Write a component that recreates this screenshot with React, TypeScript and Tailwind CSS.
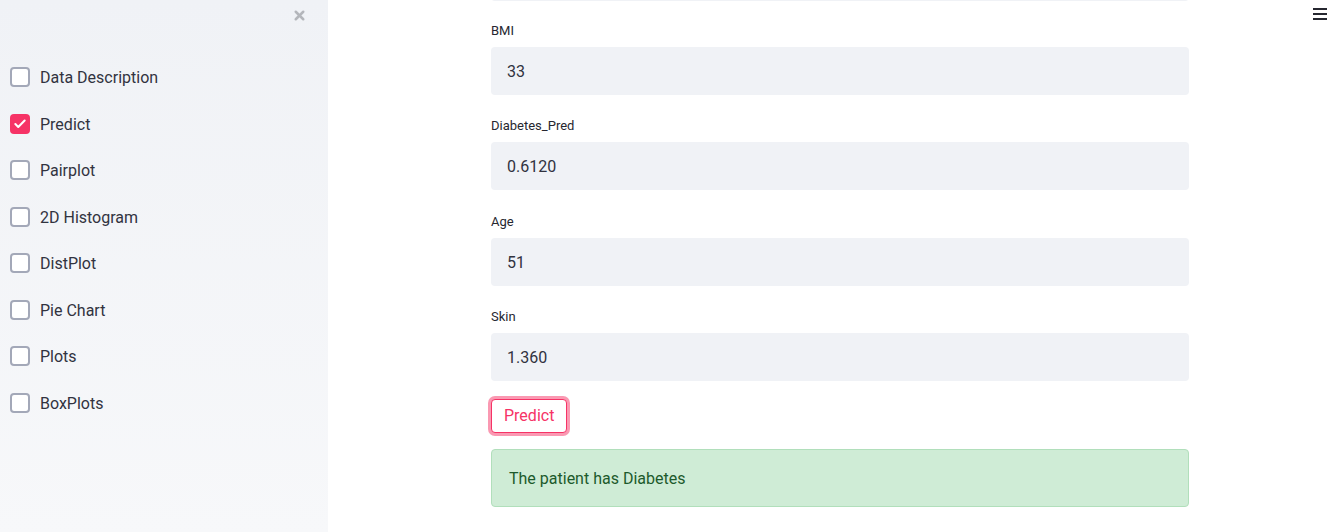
import { Check, X } from 'lucide-react';

const options = [
  { label: 'Data Description', checked: false },
  { label: 'Predict', checked: true },
  { label: 'Pairplot', checked: false },
  { label: '2D Histogram', checked: false },
  { label: 'DistPlot', checked: false },
  { label: 'Pie Chart', checked: false },
  { label: 'Plots', checked: false },
  { label: 'BoxPlots', checked: false },
];

const fields = [
  { label: 'BMI', value: '33', gap: 'mt-[20px]' },
  { label: 'Diabetes_Pred', value: '0.6120', gap: 'mt-[21px]' },
  { label: 'Age', value: '51', gap: 'mt-[22px]' },
  { label: 'Skin', value: '1.360', gap: 'mt-[21px]' },
];

export default function App() {
  return (
    <div
      className="flex h-[532px] w-[1335px] overflow-hidden bg-white text-[#262730]"
      style={{ fontFamily: 'Roboto, "Liberation Sans", sans-serif' }}
    >
      <aside className="relative w-[328px] shrink-0 bg-gradient-to-b from-[#f0f2f6] to-[#f7f8fa]">
        <X className="absolute left-[292px] top-[8px] h-[15px] w-[15px] text-[#b4b6bb]" strokeWidth={4} />
        <div className="flex flex-col pl-[10px] pt-[66px]">
          {options.map((o) => (
            <div key={o.label} className="flex h-[46.5px] items-start">
              <div
                className={`mt-[1px] flex h-[20px] w-[20px] items-center justify-center rounded-[4px] ${
                  o.checked ? 'bg-[#f63366]' : 'border-2 border-[#a3a8b8] bg-white'
                }`}
              >
                {o.checked && <Check className="h-[14px] w-[14px] text-white" strokeWidth={3.5} />}
              </div>
              <span className="ml-[10px] mt-[1px] text-[16px] leading-[22px] text-[#31333f]">{o.label}</span>
            </div>
          ))}
        </div>
      </aside>

      <main className="flex-1">
        <div className="ml-[163px] w-[698px]">
          <div className="-mt-[47px] h-[48px] rounded-[4px] bg-[#f0f2f6]" />
          {fields.map((f) => (
            <div key={f.label} className={f.gap}>
              <div className="text-[13px] leading-[20px]">{f.label}</div>
              <div className="mt-[6px] flex h-[48px] items-center rounded-[4px] bg-[#f0f2f6] px-[16px] pt-[2px] text-[16px] text-[#31333f]">
                {f.value}
              </div>
            </div>
          ))}
          <button className="mt-[18px] rounded-[4px] border border-[#f63366] bg-white px-[12px] py-[5px] text-[16px] leading-[22px] text-[#f63366] ring-[3px] ring-[#f63366]/50">
            Predict
          </button>
          <div className="mt-[16px] flex h-[58px] items-center rounded-[4px] border border-[#b1dfbb] bg-[#cfecd6] px-[17px] pt-[2px] text-[16px] text-[#1d5a2c]">
            The patient has Diabetes
          </div>
        </div>
      </main>

      <div className="absolute right-[8px] top-[8px] flex w-[14px] flex-col gap-[3px]">
        <span className="h-[2px] bg-[#262730]" />
        <span className="h-[2px] bg-[#262730]" />
        <span className="h-[2px] bg-[#262730]" />
      </div>
    </div>
  );
}
